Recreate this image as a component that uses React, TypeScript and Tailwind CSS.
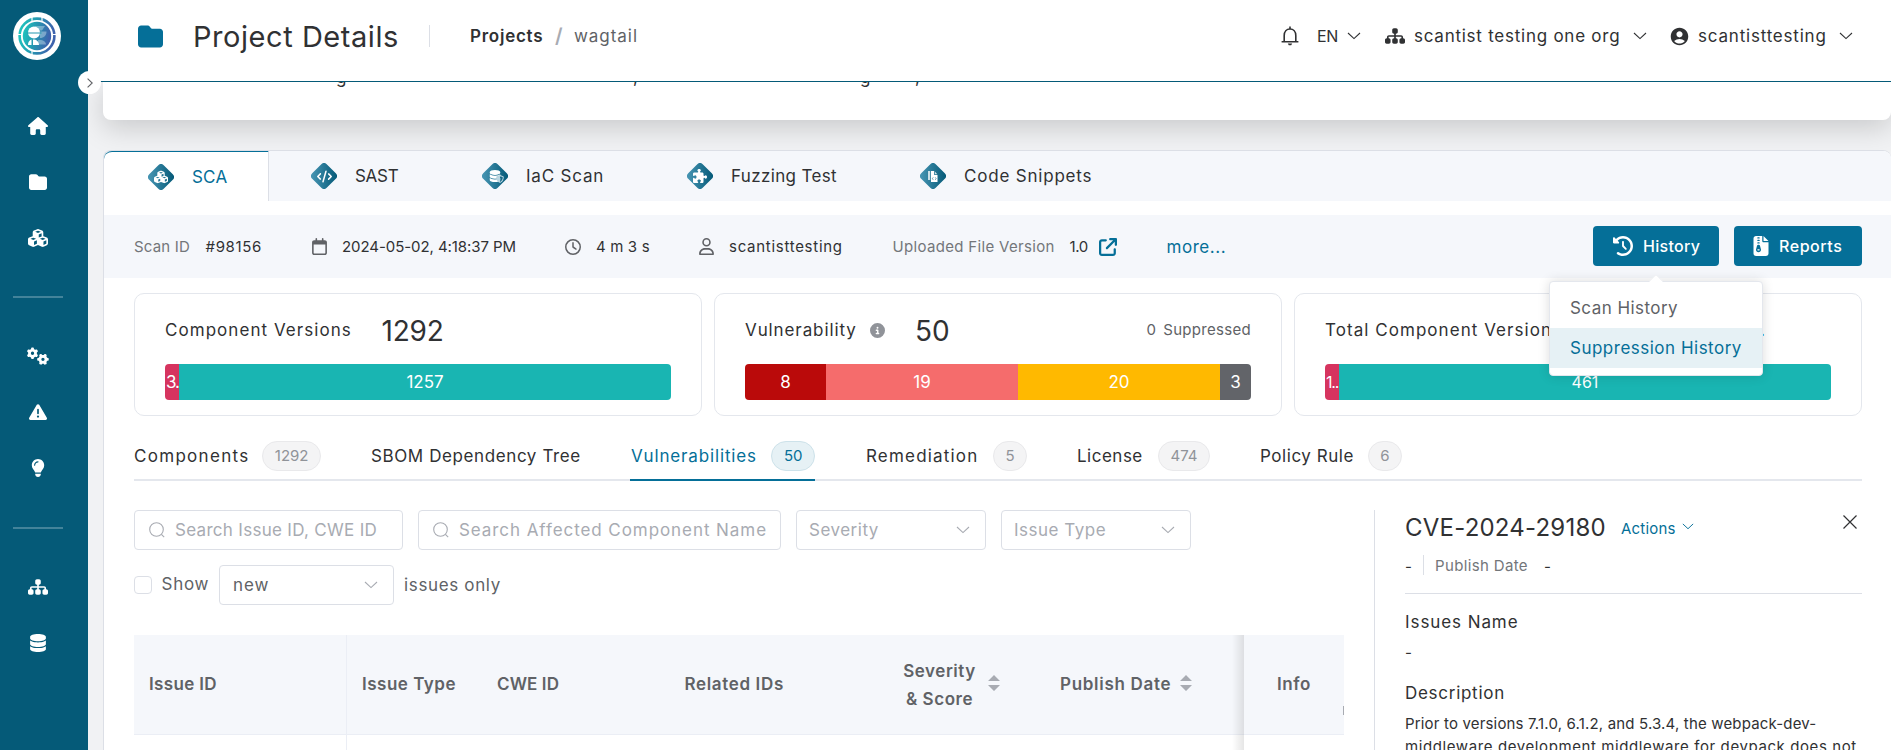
import React from "react";
import type { ReactNode } from "react";
import {
  FaHouse, FaFolder, FaCubes, FaGears, FaTriangleExclamation, FaLightbulb, FaSitemap, FaDatabase,
  FaClockRotateLeft, FaFileZipper, FaCircleInfo, FaPuzzlePiece, FaCode, FaRegCalendar, FaRegClock,
  FaRegUser, FaArrowUpRightFromSquare, FaCopy, FaShieldHalved,
} from "react-icons/fa6";
import { MdAccountCircle } from "react-icons/md";

function Chevron({ className = "" }: { className?: string }) {
  return (
    <svg viewBox="0 0 14 8" width="14" height="8" fill="none" stroke="currentColor" strokeWidth="1.1" className={className}>
      <path d="M1 1l6 5.6L13 1" />
    </svg>
  );
}

function SearchIcon() {
  return (
    <svg viewBox="0 0 16 16" width="16" height="16" fill="none" stroke="currentColor" strokeWidth="1.1">
      <circle cx="7.5" cy="7.5" r="6.8" />
      <path d="M12.4 12.4l2.8 2.8" />
    </svg>
  );
}

function Bell() {
  return (
    <svg viewBox="0 0 18 20" width="18" height="20" fill="none" stroke="#303133" strokeWidth="1.6">
      <path d="M3.2 15.4V9.6C3.2 5.6 5.6 3 9 3s5.8 2.6 5.8 6.6v5.8" />
      <path d="M.6 15.7h16.8M9 .6V3" />
      <path d="M6.8 17.6h4.4l-1 1.7H7.8z" fill="#303133" stroke="none" />
    </svg>
  );
}

function Logo() {
  return (
    <svg viewBox="0 0 48 48" width="48" height="48">
      <defs>
        <linearGradient id="brand" x1="0" x2="1" y1="0" y2="0.2">
          <stop offset="0" stopColor="#1ecbc0" />
          <stop offset="0.5" stopColor="#2497b0" />
          <stop offset="1" stopColor="#3e63ad" />
        </linearGradient>
      </defs>
      <circle cx="24" cy="24" r="24" fill="#fff" />
      <circle cx="24" cy="24" r="17.4" fill="none" stroke="url(#brand)" strokeWidth="2.6" />
      <path d="M4 22.5h4M40 22.5h4M19 5v4M19 39v4M29 5v4" stroke="#fff" strokeWidth="1.2" />
      <circle cx="24" cy="24" r="14.2" fill="url(#brand)" />
      <path d="M22 14h10l-3 4.5h-6zM27 19.5h6.5c0 4-2.500 6.500-6.500 6.500zM25 28c5-.5 8 1.500 8 4.500h-8z" fill="#fff" opacity=".35" />
      <ellipse cx="21" cy="20.500" rx="6" ry="6" fill="#fff" />
      <path d="M14.500 21h14" stroke="#2497b0" strokeWidth="1" />
      <path d="M15 33c0-3 1.300-4.800 3.500-5.500V33zM20 27.500c3.500 0 6 2 6 5.500h-6z" fill="#fff" />
    </svg>
  );
}

function Diamond({ children }: { children: ReactNode }) {
  return (
    <div className="grid h-[26px] w-[26px] shrink-0 place-items-center text-white">
      <svg viewBox="0 0 26 26" width="26" height="26" className="col-start-1 row-start-1">
        <defs>
          <linearGradient id="diamond" x1="0" x2="1" y1="0" y2="0">
            <stop offset="0" stopColor="#4795b3" />
            <stop offset="1" stopColor="#055a78" />
          </linearGradient>
        </defs>
        <path d="M10.300 1.200a3.800 3.800 0 0 1 5.400 0l9.100 9.100a3.800 3.800 0 0 1 0 5.400l-9.100 9.100a3.800 3.800 0 0 1-5.400 0l-9.100-9.100a3.800 3.800 0 0 1 0-5.400z" fill="url(#diamond)" />
      </svg>
      <div className="relative col-start-1 row-start-1 flex">{children}</div>
    </div>
  );
}

function NavItem({ children }: { children: ReactNode }) {
  return <div className="flex h-14 w-[76px] items-center justify-center">{children}</div>;
}

function Sidebar() {
  return (
    <aside className="relative z-20 flex w-[88px] shrink-0 flex-col bg-[#055a78] text-white">
      <div className="h-[98px] pl-[13px] pt-[12px]"><Logo /></div>
      <NavItem><FaHouse size={20} /></NavItem>
      <NavItem><FaFolder size={18} /></NavItem>
      <NavItem><FaCubes size={20} /></NavItem>
      <div className="mb-[30px] ml-[13px] mt-[30px] h-0.5 w-[50px] shrink-0 bg-white/25" />
      <NavItem><FaGears size={22} /></NavItem>
      <NavItem><FaTriangleExclamation size={18} /></NavItem>
      <NavItem><FaLightbulb size={18} /></NavItem>
      <div className="mb-[30px] ml-[13px] mt-[31px] h-0.5 w-[50px] shrink-0 bg-white/25" />
      <NavItem><FaSitemap size={20} /></NavItem>
      <NavItem><FaDatabase size={18} /></NavItem>
      <div className="absolute left-[78px] top-[71px] flex h-[23px] w-[23px] items-center justify-center rounded-full bg-white text-[#606266]">
        <svg viewBox="0 0 6 10" width="6" height="10" fill="none" stroke="currentColor" strokeWidth="1.100"><path d="M.6.6L5.200 5 .6 9.400" /></svg>
      </div>
    </aside>
  );
}

function Header() {
  return (
    <header className="relative z-10 flex h-[82px] shrink-0 items-start border-b border-[#055a78] bg-white text-[#303133]">
      <div className="flex h-[72px] w-full items-center pl-[50px]">
        <FaFolder size={25} color="#056f98" />
        <h1 className="ml-[30px] w-[236px] pt-0.5 text-[29px] tracking-[0.550px]">Project Details</h1>
        <div className="h-[22px] w-px bg-[#dcdfe6]" />
        <div className="ml-10 w-[85px] pt-0.5 text-[17px] font-semibold tracking-[0.750px]">Projects</div>
        <div className="w-[19px] text-[20px] font-semibold text-[#a8abb2]">/</div>
        <div className="pt-0.5 text-[17px] tracking-[0.950px] text-[#606266]">wagtail</div>
        <div className="ml-auto flex items-center text-[17px]">
          <div className="w-9"><Bell /></div>
          <div className="w-[30px] text-base tracking-[-0.300px]">EN</div>
          <Chevron />
          <FaSitemap size={20} className="ml-[24px]" />
          <div className="ml-[9px] w-[219px] pt-0.5 tracking-[0.750px]">scantist testing one org</div>
          <Chevron />
          <MdAccountCircle size={21} className="ml-[22px]" />
          <div className="ml-2 w-[141px] pt-0.5 tracking-[0.800px]">scantisttesting</div>
          <Chevron />
        </div>
        <div className="w-[38px] shrink-0" />
      </div>
    </header>
  );
}

function ScanTypeTabs() {
  return (
    <div className="flex h-[50px] shrink-0 rounded-t-lg bg-[#f5f7fb] text-[17px]">
      <div className="flex w-[165px] items-center gap-[18px] rounded-tl-lg border-r border-t border-r-[#dcdfe6] border-t-[#056f98] bg-white pl-[44px] text-[#056f98] [&>span]:pt-0.5">
        <Diamond><FaCubes size={14} /></Diamond>
        <span className="tracking-[0.200px]">SCA</span>
      </div>
      <div className="flex w-[171px] items-center gap-[18px] pl-[42px] [&>span]:pt-0.5">
        <Diamond><FaCode size={15} /></Diamond>
        <span className="tracking-[-0.300px]">SAST</span>
      </div>
      <div className="flex w-[205px] items-center gap-[18px] pl-[42px] [&>span]:pt-0.5">
        <Diamond>
          <FaDatabase size={12} />
          <FaShieldHalved size={8} color="#b9d5e0" className="absolute -bottom-px -right-[3px]" />
        </Diamond>
        <span className="tracking-[0.800px]">IaC Scan</span>
      </div>
      <div className="flex w-[233px] items-center gap-[18px] pl-[42px] [&>span]:pt-0.5">
        <Diamond><FaPuzzlePiece size={14} /></Diamond>
        <span className="tracking-[0.350px]">Fuzzing Test</span>
      </div>
      <div className="flex items-center gap-[18px] pl-[42px] [&>span]:pt-0.5">
        <Diamond>
          <svg viewBox="0 0 10 11" width="10" height="11" fill="#fff">
            <path d="M0 0h2.200v9H0z" opacity=".75" />
            <path d="M3 0h3.200v4H9.500v7H3z" />
            <path d="M7 0.800v2.400h2.400z" opacity=".8" />
            <path d="M5.200 6.400L4.400 7.600l.8 1.200M7.300 6.400l.8 1.200-.8 1.200" stroke="#1f708f" strokeWidth=".7" fill="none" />
          </svg>
        </Diamond>
        <span className="tracking-[0.800px]">Code Snippets</span>
      </div>
    </div>
  );
}

function HistoryMenu() {
  return (
    <div className="absolute left-1/2 top-[55px] z-30 w-[214px] -translate-x-1/2 rounded border border-[#e4e7ed] bg-white pb-[7px] pt-[6px] text-[17px] font-normal text-[#606266] shadow-[0_0_12px_rgba(0,0,0,0.14)]">
      <div className="absolute left-1/2 top-[-6px] h-[10px] w-[10px] -translate-x-1/2 rotate-45 rounded-tl-[2px] border-l border-t border-[#f0f1f4] bg-white" />
      <div className="flex h-10 items-center pl-5 pt-0.5 tracking-[0.450px]">Scan History</div>
      <div className="flex h-10 items-center bg-[#e6f1f5] pl-5 pt-0.5 tracking-[0.500px] text-[#056f98]">Suppression History</div>
    </div>
  );
}

function ScanBar() {
  return (
    <div className="mt-[14px] flex h-[63px] shrink-0 items-center bg-[#f5f7fb] pl-[30px] pr-[29px] text-[15px] text-[#303133] [&>span]:pt-0.5">
      <span className="w-[71.500px] tracking-[0.200px] text-[#73767a]">Scan ID</span>
      <span className="w-[105.500px] tracking-[0.650px]">#98156</span>
      <FaRegCalendar size={17} color="#606266" />
      <span className="ml-[14px] w-[223px] tracking-[-0.070px]">2024-05-02, 4:18:37 PM</span>
      <FaRegClock size={16} color="#606266" />
      <span className="ml-[15px] w-[102px] tracking-[0.150px]">4 m 3 s</span>
      <FaRegUser size={17} color="#606266" />
      <span className="ml-[14px] w-[163.500px] tracking-[0.720px]">scantisttesting</span>
      <span className="w-[177px] tracking-[0.330px] text-[#73767a]">Uploaded File Version</span>
      <span className="w-[29px] tracking-[-0.350px]">1.0</span>
      <FaArrowUpRightFromSquare size={18} color="#056f98" />
      <span className="ml-[50px] text-[17px] tracking-[0.550px] text-[#056f98]">more...</span>
      <div className="-mt-0.5 ml-auto flex gap-[15px] text-base font-medium text-white">
        <div className="relative flex h-10 w-[126px] items-center rounded bg-[#056f98] pl-5">
          <FaClockRotateLeft size={20} />
          <span className="ml-[10px] tracking-[0.300px]">History</span>
          <HistoryMenu />
        </div>
        <div className="flex h-10 w-32 items-center rounded bg-[#056f98] pl-[17px]">
          <FaFileZipper size={20} />
          <span className="ml-2 tracking-[0.550px]">Reports</span>
        </div>
      </div>
    </div>
  );
}

function StatCard({ title, bar }: { title: ReactNode; bar: ReactNode }) {
  return (
    <div className="h-[123px] flex-1 rounded-[10px] border border-[#e4e7ed] px-[30px] text-[#303133]">
      <div className="flex h-[70px] items-center pt-0.5 text-[17px] [&>span]:pt-px">{title}</div>
      <div className="flex h-9 overflow-hidden rounded text-[17px] leading-9 text-white">{bar}</div>
    </div>
  );
}

function Stats() {
  return (
    <div className="ml-[30px] mr-[29px] mt-[15px] flex shrink-0 gap-3">
      <StatCard
        title={<><span className="w-[216.500px] tracking-[1.050px]">Component Versions</span><span className="text-[28px] tracking-[-0.200px]">1292</span></>}
        bar={<><span className="w-[14px] overflow-hidden bg-[#d6345f] pl-px tracking-[-1px]">3.</span><span className="flex-1 bg-[#19b5b2] text-center">1257</span></>}
      />
      <StatCard
        title={<><span className="w-[124.500px] tracking-[0.900px]">Vulnerability</span><FaCircleInfo size={15} color="#909399" /><span className="ml-[30.500px] text-[28px]">50</span><span className="ml-auto text-[15px] tracking-[0.300px] text-[#606266]"><span className="mr-[7px]">0</span>Suppressed</span></>}
        bar={<><span className="w-[81px] bg-[#ba0a0a] text-center">8</span><span className="w-48 bg-[#f56c6c] text-center">19</span><span className="w-[202px] bg-[#ffb900] text-center">20</span><span className="flex-1 bg-[#626469] text-center">3</span></>}
      />
      <StatCard
        title={<><span className="w-[435px] tracking-[1.050px]">Total Component Versions</span><span className="text-[#056f98]">.</span></>}
        bar={<><span className="w-[14px] overflow-hidden bg-[#d6345f] pl-px text-[16px] tracking-[-1.200px]">1..</span><span className="flex-1 bg-[#19b5b2] text-center text-base leading-9">461</span></>}
      />
    </div>
  );
}

function Badge({ children, active = false }: { children: ReactNode; active?: boolean }) {
  return (
    <div className={active
      ? "flex h-[30px] items-center rounded-full border border-[#cde2ea] bg-[#e6f1f5] px-[11.500px] pt-px text-[15px] text-[#056f98]"
      : "flex h-[30px] items-center rounded-full border border-[#e9e9eb] bg-[#f4f4f5] px-[11.500px] pt-px text-[15px] text-[#909399]"}>
      {children}
    </div>
  );
}

function SectionTabs() {
  return (
    <div className="ml-[30px] mr-[29px] mt-[15px] flex h-[50px] shrink-0 border-b-2 border-[#e4e7ed] text-[17px] text-[#303133] [&>div]:pt-0.5 [&_span]:pt-0.5">
      <div className="mr-[50px] flex w-[187px] items-center justify-between"><span className="tracking-[1.300px]">Components</span><Badge>1292</Badge></div>
      <div className="mr-[49px] flex w-[210px] items-center"><span className="tracking-[0.600px]">SBOM Dependency Tree</span></div>
      <div className="mr-[50px] flex h-[50px] w-[185px] items-center justify-between border-b-2 border-[#056f98] pl-px text-[#056f98]"><span className="tracking-[0.850px]">Vulnerabilities</span><Badge active>50</Badge></div>
      <div className="mr-[50px] flex w-[162px] items-center justify-between pl-px"><span className="tracking-[1.180px]">Remediation</span><Badge>5</Badge></div>
      <div className="mr-[50px] flex w-[133px] items-center justify-between"><span className="tracking-[0.500px]">License</span><Badge>474</Badge></div>
      <div className="flex w-[142px] items-center justify-between"><span className="tracking-[0.550px]">Policy Rule</span><Badge>6</Badge></div>
    </div>
  );
}

function Filters() {
  return (
    <>
      <div className="flex gap-[15px] text-[17px] text-[#a8abb2] [&_span]:pt-0.5">
        <div className="flex h-10 w-[269px] items-center gap-[10px] rounded border border-[#dcdfe6] pl-[14px]"><SearchIcon /><span className="tracking-[0.300px]">Search Issue ID, CWE ID</span></div>
        <div className="flex h-10 w-[363px] items-center gap-[10px] rounded border border-[#dcdfe6] pl-[14px]"><SearchIcon /><span className="tracking-[0.930px]">Search Affected Component Name</span></div>
        <div className="flex h-10 w-[190px] items-center justify-between rounded border border-[#dcdfe6] pl-3 pr-[15px]"><span className="tracking-[0.500px]">Severity</span><Chevron /></div>
        <div className="flex h-10 w-[190px] items-center justify-between rounded border border-[#dcdfe6] pl-3 pr-[15px]"><span className="tracking-[0.500px]">Issue Type</span><Chevron /></div>
      </div>
      <div className="mt-[15px] flex items-center text-[17px] text-[#606266]">
        <span className="h-[18px] w-[18px] rounded-sm border border-[#dcdfe6]" />
        <span className="ml-[9.500px] w-[57.500px] tracking-[0.750px]">Show</span>
        <div className="flex h-10 w-[175px] items-center justify-between rounded border border-[#dcdfe6] pl-[13px] pr-[15px]"><span className="pt-0.5 tracking-[0.900px]">new</span><Chevron className="text-[#a8abb2]" /></div>
        <span className="ml-[10px] pt-0.5 tracking-[0.650px]">issues only</span>
      </div>
    </>
  );
}

function Sort() {
  return (
    <svg viewBox="0 0 12 16" width="12" height="16" fill="#a8abb2" className="-mt-1">
      <path d="M6 0l6 6H0zM6 16l6-6H0z" />
    </svg>
  );
}

function IssueTable() {
  return (
    <div className="relative mt-[30px] flex h-[115px] flex-col overflow-hidden text-[17px] font-semibold text-[#606266]">
      <div className="flex h-[100px] shrink-0 items-center border-b border-[#ebeef5] bg-[#f5f7fb]">
        <div className="flex h-full w-[213px] items-center border-r border-[#ebeef5] pl-[15px] tracking-[0.350px]">Issue ID</div>
        <div className="w-[135px] pl-[15px] tracking-[0.500px]">Issue Type</div>
        <div className="w-[187px] pl-[15px] tracking-[0.100px]">CWE ID</div>
        <div className="w-[220px] pl-[15.500px] tracking-[0.650px]">Related IDs</div>
        <div className="flex w-[156px] items-center pl-[14px]">
          <div className="w-[73px] text-center leading-7 tracking-[0.550px]">Severity<br />&amp; Score</div>
          <div className="ml-3"><Sort /></div>
        </div>
        <div className="flex w-[199px] items-center pl-[15px]">
          <span className="w-[120px] tracking-[0.700px]">Publish Date</span><Sort />
        </div>
        <div className="flex h-full flex-1 items-center pl-[33px] tracking-[0.600px]">Info</div>
      </div>
      <div className="h-[15px] w-[213px] border-r border-[#ebeef5]" />
      <div className="absolute bottom-0 right-[100px] top-0 w-3 bg-gradient-to-r from-transparent to-black/10" />
      <div className="absolute right-0 top-[71px] h-[9px] w-px bg-[#a8abb2]" />
    </div>
  );
}

function DetailPanel() {
  return (
    <div className="ml-[30px] flex h-[260px] flex-1 flex-col overflow-hidden border-l border-[#dcdfe6] pl-[30px] text-[#303133]">
      <div className="flex h-9 items-center">
        <h2 className="w-[216px] whitespace-nowrap text-[24px] tracking-[0.220px]">CVE-2024-29180</h2>
        <span className="w-[61px] pt-0.5 text-[15px] tracking-[0.200px] text-[#056f98]">Actions</span>
        <Chevron className="-mt-1 h-[7px] w-3 text-[#056f98]" />
        <svg viewBox="0 0 14 14" width="14" height="14" fill="none" stroke="#303133" strokeWidth="1.200" className="-mt-3 ml-auto mr-[5px]"><path d="M.5.5l13 13M13.500.5L.5 13.500" /></svg>
      </div>
      <div className="mt-[9px] flex h-5 shrink-0 items-center text-[15px]">
        <span className="w-[18px] pt-1">-</span>
        <span className="h-5 w-px bg-[#dcdfe6]" />
        <span className="ml-[11px] w-[109px] pt-[3px] tracking-[0.350px] text-[#73767a]">Publish Date</span>
        <span className="pt-1">-</span>
      </div>
      <div className="mt-[18px] h-px shrink-0 bg-[#dcdfe6]" />
      <div className="mt-[16px] h-6 shrink-0 text-[17px] leading-6 tracking-[0.920px]">Issues Name</div>
      <div className="mt-[8px] h-[22px] shrink-0 text-[15px] leading-[22px]">-</div>
      <div className="mt-[17px] h-6 shrink-0 text-[17px] leading-6 tracking-[0.720px]">Description</div>
      <p className="mt-[8px] whitespace-nowrap text-[15px] leading-[22.500px]">
        <span className="block tracking-[0.170px]">Prior to versions 7.1.0, 6.1.2, and 5.3.4, the webpack-dev-</span>
        <span className="block tracking-[0.600px]">middleware development middleware for devpack does not</span>
      </p>
    </div>
  );
}

export default function App() {
  return (
    <div className="flex h-[750px] w-full overflow-hidden whitespace-nowrap bg-[#f1f2f4] font-['Inter',sans-serif]">
      <Sidebar />
      <div className="flex min-w-0 flex-1 flex-col">
        <Header />
        <div className="ml-[15px] h-[38px] shrink-0 rounded-b-lg bg-white text-[17px] text-[#303133] shadow-[0_8px_28px_rgba(0,0,0,0.170)]">
          <div className="flex h-[5px] items-end overflow-hidden pl-[233px] leading-[20px]">
            <span className="w-[297px]">g</span>
            <span className="w-[227px]">,</span>
            <span className="w-[55px]">g</span>
            <span>,</span>
          </div>
        </div>
        <main className="relative ml-[15px] mt-[30px] flex min-h-0 flex-1 flex-col rounded-t-lg border-l border-t border-[#dcdfe6] bg-white text-[#303133]">
          <ScanTypeTabs />
          <ScanBar />
          <Stats />
          <SectionTabs />
          <div className="ml-[30px] mr-[29px] mt-[29px] flex">
            <div className="w-[1210px] shrink-0">
              <Filters />
              <IssueTable />
            </div>
            <DetailPanel />
          </div>
        </main>
      </div>
    </div>
  );
}
